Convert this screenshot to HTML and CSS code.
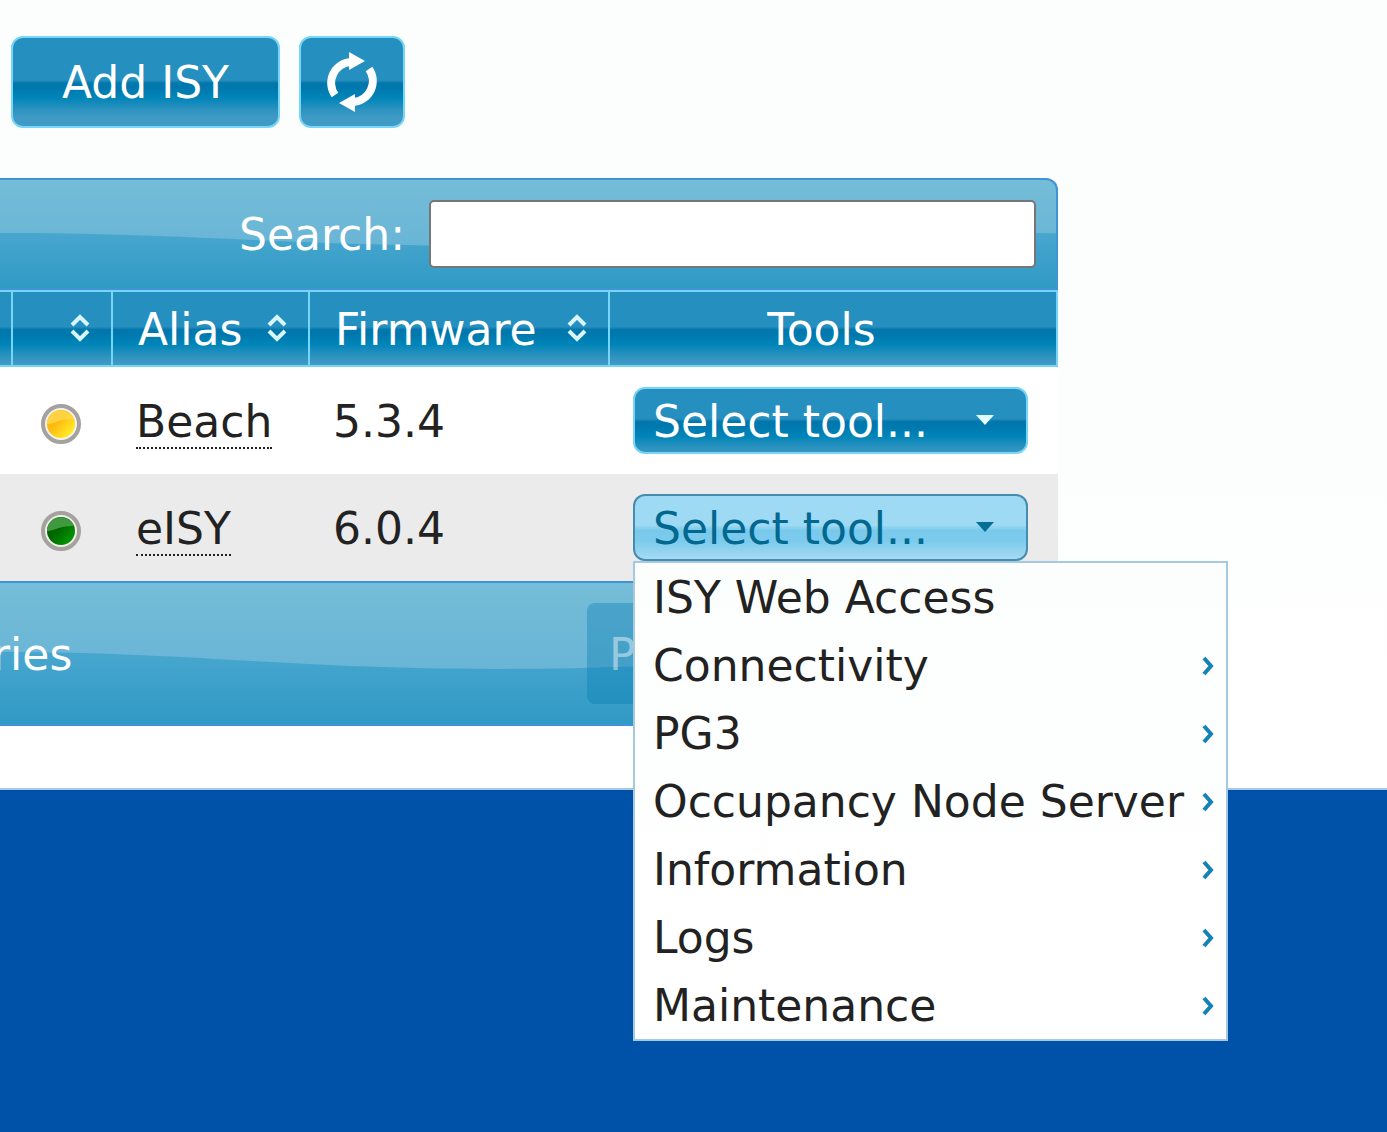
FILE: index.html
```html
<!DOCTYPE html>
<html lang="en">
<head>
    <meta charset="UTF-8">
    <meta name="viewport" content="width=device-width, initial-scale=1.0">
    <title>ISY</title>
    <link rel="stylesheet" href="styles.css">
</head>
<body>
    <svg class="symbols" aria-hidden="true">
        <symbol id="sort" viewBox="0 0 20 28">
            <path d="M2 11 L10 3 L18 11 M2 17 L10 25 L18 17" fill="none" stroke="#d8f5fb" stroke-width="4"/>
        </symbol>
        <symbol id="caret" viewBox="0 0 20 12">
            <path d="M1 1 H19 L10 11 Z" fill="currentColor"/>
        </symbol>
        <symbol id="arrow" viewBox="0 0 12 20">
            <path d="M2 2 L9 10 L2 18" fill="none" stroke="currentColor" stroke-width="4"/>
        </symbol>
    </svg>

    <main class="content">
        <div class="actions">
            <button class="btn add-btn" type="button">Add ISY</button>
            <button class="btn refresh-btn" type="button" aria-label="Refresh">
                <svg width="52" height="60" viewBox="0 0 52 60">
                    <path d="M9 43 A21 21 0 0 1 25 10 M43 17 A21 21 0 0 1 27 50" fill="none" stroke="#fff" stroke-width="8"/>
                    <path d="M23 0 L39 9 L23 18 Z M29 42 L13 51 L29 60 Z" fill="#fff"/>
                </svg>
            </button>
        </div>

        <div class="grid">
            <div class="toolbar toolbar-top">
                <label for="search">Search:</label>
                <input id="search" class="search" type="text">
            </div>
            <table class="isy-table">
                <colgroup>
                    <col class="col-edge">
                    <col class="col-status">
                    <col class="col-alias">
                    <col class="col-firmware">
                    <col>
                </colgroup>
                <thead>
                    <tr>
                        <th></th>
                        <th><div class="head end"><svg class="sort"><use href="#sort"/></svg></div></th>
                        <th><div class="head">Alias<svg class="sort"><use href="#sort"/></svg></div></th>
                        <th><div class="head">Firmware<svg class="sort"><use href="#sort"/></svg></div></th>
                        <th class="tools-head">Tools</th>
                    </tr>
                </thead>
                <tbody>
                    <tr>
                        <td class="edge"></td>
                        <td class="status">
                            <svg class="led" viewBox="0 0 40 40">
                                <defs>
                                    <linearGradient id="yellow" x1="0" y1="0" x2="1" y2="1">
                                        <stop offset="0.4" stop-color="#ffb90f"/>
                                        <stop offset="1" stop-color="#ffff30"/>
                                    </linearGradient>
                                </defs>
                                <circle cx="20" cy="20" r="18" fill="#f4f3ee" stroke="#a5a19e" stroke-width="4"/>
                                <circle cx="20" cy="20" r="14" fill="url(#yellow)"/>
                                <path d="M6 20 A14 14 0 0 1 33 15 Q22 15 15 18 Q9 20 6 20 Z" fill="#ffdd55" opacity="0.7"/>
                            </svg>
                        </td>
                        <td class="text"><span class="alias">Beach</span></td>
                        <td class="text">5.3.4</td>
                        <td class="tools">
                            <button class="btn tool-btn" type="button" aria-haspopup="true">Select tool...<svg class="caret"><use href="#caret"/></svg></button>
                        </td>
                    </tr>
                    <tr class="even">
                        <td class="edge"></td>
                        <td class="status">
                            <svg class="led" viewBox="0 0 40 40">
                                <defs>
                                    <linearGradient id="green" x1="0" y1="0" x2="1" y2="1">
                                        <stop offset="0.4" stop-color="#006400"/>
                                        <stop offset="1" stop-color="#00a800"/>
                                    </linearGradient>
                                </defs>
                                <circle cx="20" cy="20" r="18" fill="#f1f0ed" stroke="#a5a19e" stroke-width="4"/>
                                <circle cx="20" cy="20" r="14" fill="url(#green)"/>
                                <path d="M6 20 A14 14 0 0 1 33 15 Q22 15 15 18 Q9 20 6 20 Z" fill="#4aa34a" opacity="0.85"/>
                            </svg>
                        </td>
                        <td class="text"><span class="alias">eISY</span></td>
                        <td class="text">6.0.4</td>
                        <td class="tools">
                            <div class="dropdown">
                                <button class="btn tool-btn active" type="button" aria-haspopup="true" aria-expanded="true">Select tool...<svg class="caret"><use href="#caret"/></svg></button>
                                <ul class="menu">
                                    <li><a href="#">ISY Web Access</a></li>
                                    <li><a href="#">Connectivity<svg class="arrow"><use href="#arrow"/></svg></a></li>
                                    <li><a href="#">PG3<svg class="arrow"><use href="#arrow"/></svg></a></li>
                                    <li><a href="#">Occupancy Node Server<svg class="arrow"><use href="#arrow"/></svg></a></li>
                                    <li><a href="#">Information<svg class="arrow"><use href="#arrow"/></svg></a></li>
                                    <li><a href="#">Logs<svg class="arrow"><use href="#arrow"/></svg></a></li>
                                    <li><a href="#">Maintenance<svg class="arrow"><use href="#arrow"/></svg></a></li>
                                </ul>
                            </div>
                        </td>
                    </tr>
                </tbody>
            </table>
            <div class="toolbar toolbar-bottom">
                <span class="info">ries</span>
                <button class="page-btn" type="button" disabled>P</button>
            </div>
        </div>
    </main>
</body>
</html>
```

FILE: styles.css
```css
* {
    box-sizing: border-box;
}
body {
    margin: 0;
    min-height: 100vh;
    background: #0051a8;
    color: #222;
    font-family: Verdana, "DejaVu Sans", sans-serif;
    font-size: 44px;
    line-height: 50px;
    overflow-x: hidden;
}
button,
input {
    font: inherit;
}
.symbols {
    display: none;
}
.content {
    padding: 36px 0 62px;
    background: linear-gradient(#fcfefd, #fcfefd 60%, #fff 90%);
    border-bottom: 2px solid #a6c9e2;
}

/* buttons */
.actions {
    display: flex;
    gap: 19px;
    padding-left: 11px;
    margin-bottom: 50px;
}
.btn {
    display: flex;
    align-items: center;
    justify-content: center;
    border: 2px solid #77d5f7;
    border-radius: 12px;
    background: linear-gradient(#2590bf 48px, #2187b6 49px, #0078ae 51px, #0078ae 56px, #0085b8 66px, #2f93c0 78px, #3f9bc5 86px) center / 100% 100px;
    color: #fff;
    cursor: pointer;
}
.add-btn {
    width: 269px;
    height: 92px;
    padding: 2px 0 0;
}
.refresh-btn {
    width: 106px;
    height: 92px;
    padding: 0;
}
.tool-btn {
    width: 100%;
    height: 67px;
    padding: 2px 31px 0 18px;
    justify-content: space-between;
}
.tool-btn.active {
    border-color: #448dae;
    background: linear-gradient(#9fdaf4 48px, #93d5f1 49px, #79c9ec 53px, #7ccbed 64px, #addcf3 84px) center / 100% 100px;
    color: #026890;
}
.caret {
    width: 20px;
    height: 12px;
    margin-bottom: 4px;
    color: #e0fdff;
}
.active .caret {
    color: #056f95;
}

/* grid */
.grid {
    width: 100%;
    max-width: 1058px;
}
.toolbar {
    display: flex;
    align-items: center;
    border: 2px solid #3f94d8;
    border-left: 0;
    color: #fff;
    background: url("data:image/svg+xml,%3Csvg xmlns='http://www.w3.org/2000/svg' viewBox='0 0 1000 100' preserveAspectRatio='none'%3E%3ClinearGradient id='a' x2='0' y2='1'%3E%3Cstop offset='.5' stop-color='%2347a6ce'/%3E%3Cstop offset='1' stop-color='%232f9ac5'/%3E%3C/linearGradient%3E%3ClinearGradient id='b' x2='0' y2='1'%3E%3Cstop stop-color='%2375bdd8'/%3E%3Cstop offset='1' stop-color='%2369b5d6'/%3E%3C/linearGradient%3E%3Crect width='1000' height='100' fill='url(%23a)'/%3E%3Cpath d='M0 0H1000V49C840 49 700 61 500 61C290 61 190 49 0 49Z' fill='url(%23b)'/%3E%3C/svg%3E") 0 0 / 1000px 100%;
}
.toolbar label,
.info {
    padding-top: 2px;
}
.toolbar-top {
    justify-content: flex-end;
    gap: 24px;
    padding: 20px;
    border-top-right-radius: 12px;
}
.toolbar-bottom {
    justify-content: space-between;
    padding: 20px 20px 20px 0;
    border-bottom-right-radius: 12px;
}
.search {
    width: 607px;
    height: 68px;
    padding: 4px 10px;
    border: 2px solid #767676;
    border-radius: 5px;
    background: #fff;
}
.info {
    margin-left: -8px;
}
.page-btn {
    width: 449px;
    height: 101px;
    padding: 2px 22px 0;
    border: 0;
    border-radius: 8px;
    background: rgba(0, 120, 174, 0.35);
    color: rgba(255, 255, 255, 0.45);
    text-align: left;
}

/* table */
.isy-table {
    width: 100%;
    table-layout: fixed;
    border-collapse: separate;
    border-spacing: 0;
    background: #fff;
}
.col-edge {
    width: 11px;
}
.col-status {
    width: 100px;
}
.col-alias {
    width: 197px;
}
.col-firmware {
    width: 300px;
}
th {
    height: 77px;
    padding: 2px 21px 0 25px;
    border: 2px solid #77d5f7;
    border-right: 0;
    background: linear-gradient(#2590bf 48px, #2187b6 49px, #0078ae 51px, #0078ae 56px, #0085b8 66px, #2f93c0 78px, #3f9bc5 86px) center / 100% 100px;
    color: #fff;
    font-weight: normal;
}
th:first-child {
    border-left: 0;
    padding: 0;
}
th.tools-head {
    padding-right: 48px;
    border-right: 2px solid #77d5f7;
}
.head {
    display: flex;
    align-items: center;
    justify-content: space-between;
}
.head.end {
    justify-content: flex-end;
}
.sort {
    width: 20px;
    height: 28px;
    margin-bottom: 4px;
    flex: none;
}
td {
    height: 107px;
    padding: 0;
}
.even {
    background: #ebebeb;
}
.status {
    padding-top: 6px;
    text-align: center;
}
.led {
    display: block;
    width: 40px;
    height: 40px;
    margin: 0 auto;
}
td.text {
    padding: 2px 0 0 25px;
}
.alias {
    border-bottom: 2px dotted #222;
}
td.tools {
    padding: 0 30px 0 25px;
}

/* tool menu */
.dropdown {
    position: relative;
}
.menu {
    position: absolute;
    top: 100%;
    left: 0;
    z-index: 10;
    width: 595px;
    margin: 0;
    padding: 0;
    list-style: none;
    border: 2px solid #a6c9e2;
    background: linear-gradient(#fcfefd, #fff);
}
.menu a {
    display: flex;
    align-items: center;
    justify-content: space-between;
    height: 68px;
    padding: 2px 12px 0 18px;
    color: #222;
    text-decoration: none;
    white-space: nowrap;
}
.arrow {
    width: 12px;
    height: 20px;
    flex: none;
    color: #1482b8;
}
```
